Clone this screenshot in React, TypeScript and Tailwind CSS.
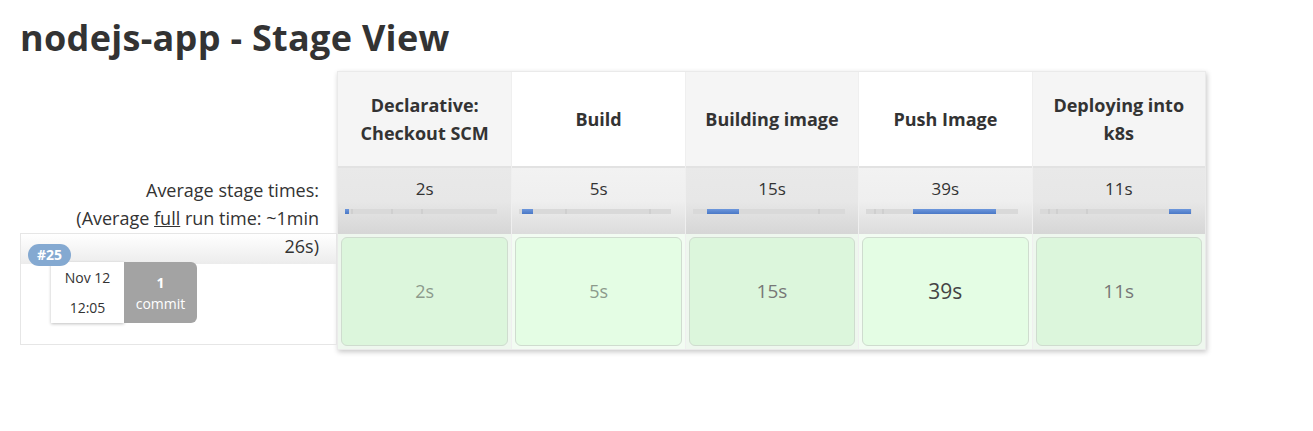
const font = { fontFamily: '"Open Sans", "Noto Sans", sans-serif' };

type Stage = {
  name: string[];
  avg: string;
  bar: [number, number];
  ticks: number[];
  cell: string;
  cellText: string;
};

const stages: Stage[] = [
  { name: ['Declarative:', 'Checkout SCM'], avg: '2s', bar: [0, 4], ticks: [6, 46, 76], cell: 'text-[18px] text-[#8c9a8c]', cellText: '2s' },
  { name: ['Build'], avg: '5s', bar: [3, 14], ticks: [46, 130], cell: 'text-[18px] text-[#8c9a8c]', cellText: '5s' },
  { name: ['Building image'], avg: '15s', bar: [14, 46], ticks: [125], cell: 'text-[19px] text-[#777]', cellText: '15s' },
  { name: ['Push Image'], avg: '39s', bar: [47, 130], ticks: [8, 16], cell: 'text-[21px] text-[#444]', cellText: '39s' },
  { name: ['Deploying into', 'k8s'], avg: '11s', bar: [129, 151], ticks: [8, 16, 46], cell: 'text-[19px] text-[#777]', cellText: '11s' },
];

function Bar({ bar, ticks }: { bar: [number, number]; ticks: number[] }) {
  return (
    <div className="relative ml-[7px] h-[5px] w-[152px] bg-[#d9d9d9]">
      {ticks.map((t) => (
        <div key={t} className="absolute top-0 h-[5px] w-[2px] bg-[#cfcfcf]" style={{ left: t }} />
      ))}
      <div
        className="absolute top-0 h-[5px] bg-gradient-to-b from-[#6d97dc] to-[#4a78c6]"
        style={{ left: bar[0], width: bar[1] - bar[0] }}
      />
    </div>
  );
}

export default function App() {
  return (
    <div className="min-h-[431px] bg-white px-5 pt-[17px] text-[#333]" style={font}>
      <h1 className="text-[36px] font-bold leading-[42px] tracking-[0.3px] text-[#333]">nodejs-app - Stage View</h1>

      <div className="mt-[12px] flex">
        {/* left column */}
        <div className="w-[317px] shrink-0">
          <div className="h-[95px]" />
          <div className="relative z-10 h-[67px] pr-[18px] pt-[10px] text-right text-[18px] leading-[28px]">
            Average stage times:
            <br />
            (Average <span className="underline">full</span> run time: ~1min
            <br />
            26s)
          </div>
          <div className="relative h-[112px] border border-[#e6e6e6]">
            <div className="h-[30px] bg-gradient-to-b from-white to-[#ececec]" />
            <span className="absolute left-[7px] top-[10px] rounded-full bg-[#84a9d1] px-[9px] text-[14px] font-bold leading-[22px] text-white">
              #25
            </span>
            <div className="-mt-[2px] ml-[30px] flex h-[61px] w-[146px]">
              <div className="flex w-[73px] flex-col items-center justify-center gap-[8px] bg-white text-[14px] leading-[22px] shadow-[0_1px_3px_rgba(0,0,0,0.25)]">
                <span>Nov 12</span>
                <span>12:05</span>
              </div>
              <div className="flex w-[73px] flex-col items-center justify-center rounded-r-md bg-[#a3a3a3] text-[14px] leading-[21px] text-white">
                <span className="font-bold">1</span>
                <span>commit</span>
              </div>
            </div>
          </div>
        </div>

        {/* stage table */}
        <div className="flex h-[279px] border border-[#eaeaea] shadow-[1px_2px_5px_rgba(0,0,0,0.22)]">
          {stages.map((s, i) => {
            const odd = i % 2 === 1;
            return (
              <div key={i} className={`flex w-[173.4px] flex-col ${i > 0 ? 'border-l border-[#efefef]' : ''}`}>
                <div
                  className={`flex h-[94px] flex-col items-center justify-center text-[18px] font-bold leading-[28px] ${odd ? 'bg-white' : 'bg-[#f5f5f5]'}`}
                >
                  {s.name.map((n) => (
                    <span key={n}>{n}</span>
                  ))}
                </div>
                <div
                  className={`h-[68px] border-t-2 border-[#e2e2e2] pt-[9px] ${odd ? 'bg-gradient-to-b from-[#f2f2f2] via-[#efefef] to-[#dcdcdc]' : 'bg-gradient-to-b from-[#e9e9e9] via-[#e7e7e7] to-[#d6d6d6]'}`}
                >
                  <div className="text-center text-[17px] leading-[24px]">{s.avg}</div>
                  <div className="mt-[8px]">
                    <Bar bar={s.bar} ticks={s.ticks} />
                  </div>
                </div>
                <div className={`flex-1 p-[3px] ${odd ? 'bg-[#f2fcf2]' : 'bg-[#eef7ee]'}`}>
                  <div
                    className={`flex h-full items-center justify-center rounded-md border border-[#cfdccf] ${odd ? 'bg-[#e4fde4]' : 'bg-[#dcf6dc]'} ${s.cell}`}
                  >
                    {s.cellText}
                  </div>
                </div>
              </div>
            );
          })}
        </div>
      </div>
    </div>
  );
}
